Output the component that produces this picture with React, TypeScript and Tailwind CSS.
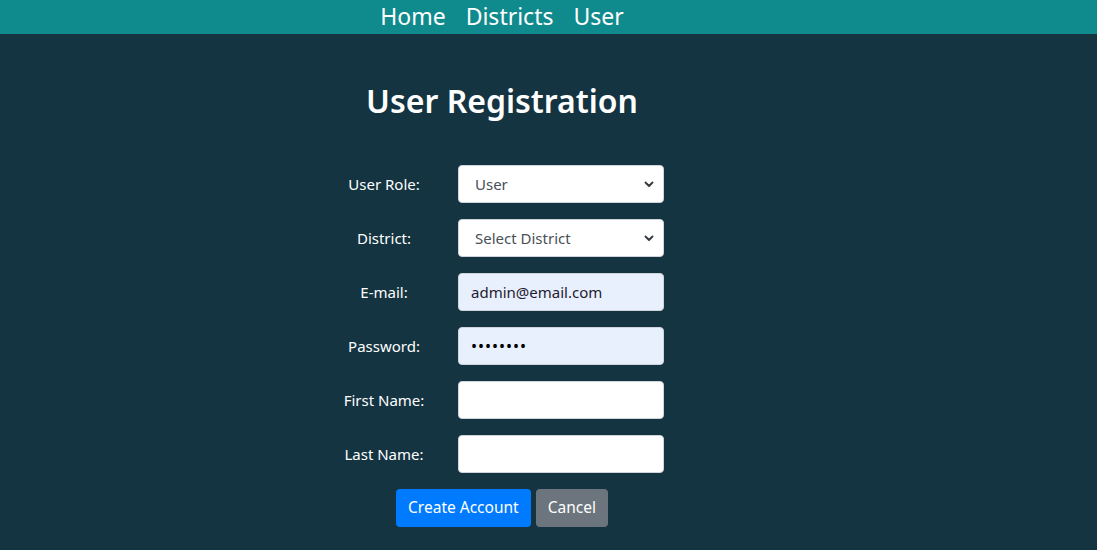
import React from "react"

const font = { fontFamily: '"Noto Sans", "Open Sans", sans-serif' }

function Chevron() {
  return (
    <svg className="pointer-events-none absolute right-[10px] top-1/2 -translate-y-1/2 w-[10px] h-[10px]" viewBox="0 0 4 4">
      <path d="M0.6 1.4l1.4 1.4 1.4-1.4" stroke="#343a40" strokeWidth="0.75" fill="none" strokeLinecap="round" strokeLinejoin="round" />
    </svg>
  )
}

function Select({ value, options }: { readonly value: string; readonly options: readonly string[] }) {
  return (
    <div className="relative w-[206px]">
      <select
        defaultValue={value}
        className="appearance-none w-full h-[38px] rounded-[4px] border border-[#ced4da] bg-white pl-[16px] pr-7 text-[15px] text-[#495057] outline-none"
        style={font}
      >
        {options.map((o) => (
          <option key={o}>{o}</option>
        ))}
      </select>
      <Chevron />
    </div>
  )
}

function TextInput({ type = "text", value = "", filled = false }: { readonly type?: string; readonly value?: string; readonly filled?: boolean }) {
  return (
    <input
      type={type}
      defaultValue={value}
      className={
        "w-[206px] h-[38px] rounded-[4px] border border-[#ced4da] px-[12px] text-[15px] outline-none " +
        (filled ? "bg-[#e8f0fe] " : "bg-white ") +
        (type === "password" ? "text-black text-[16px] tracking-[1px]" : "text-[#1f1b2e]")
      }
      style={font}
    />
  )
}

const rows: { label: string; field: React.ReactNode }[] = [
  { label: "User Role:", field: <Select value="User" options={["User", "Admin"]} /> },
  { label: "District:", field: <Select value="Select District" options={["Select District"]} /> },
  { label: "E-mail:", field: <TextInput value="admin@email.com" filled /> },
  { label: "Password:", field: <TextInput type="password" value="password" filled /> },
  { label: "First Name:", field: <TextInput /> },
  { label: "Last Name:", field: <TextInput /> },
]

export default function App() {
  return (
    <div className="min-h-[550px] bg-[#143441] text-white" style={font}>
      <nav className="h-[34px] bg-[#0f8b8e]">
        <div className="w-[1004px] flex justify-center gap-[20px] text-[23px] leading-[33px]">
          <a href="#">Home</a>
          <a href="#">Districts</a>
          <a href="#">User</a>
        </div>
      </nav>

      <div className="w-[1004px] flex flex-col items-center">
        <h1 className="mt-[44px] text-[32px] font-semibold leading-[46px]">User Registration</h1>

        <form className="mt-[41px] flex flex-col gap-[16px]">
          {rows.map((r) => (
            <div key={r.label} className="flex items-center gap-[30px]">
              <label className="w-[88px] text-center text-[15px]">{r.label}</label>
              {r.field}
            </div>
          ))}
          <div className="flex justify-center gap-[5px]">
            <button type="button" className="h-[38px] px-[12px] rounded-[4px] bg-[#007bff] text-[15.5px] text-white">
              Create Account
            </button>
            <button type="button" className="h-[38px] px-[12px] rounded-[4px] bg-[#6c757d] text-[15.5px] text-white">
              Cancel
            </button>
          </div>
        </form>
      </div>
    </div>
  )
}
